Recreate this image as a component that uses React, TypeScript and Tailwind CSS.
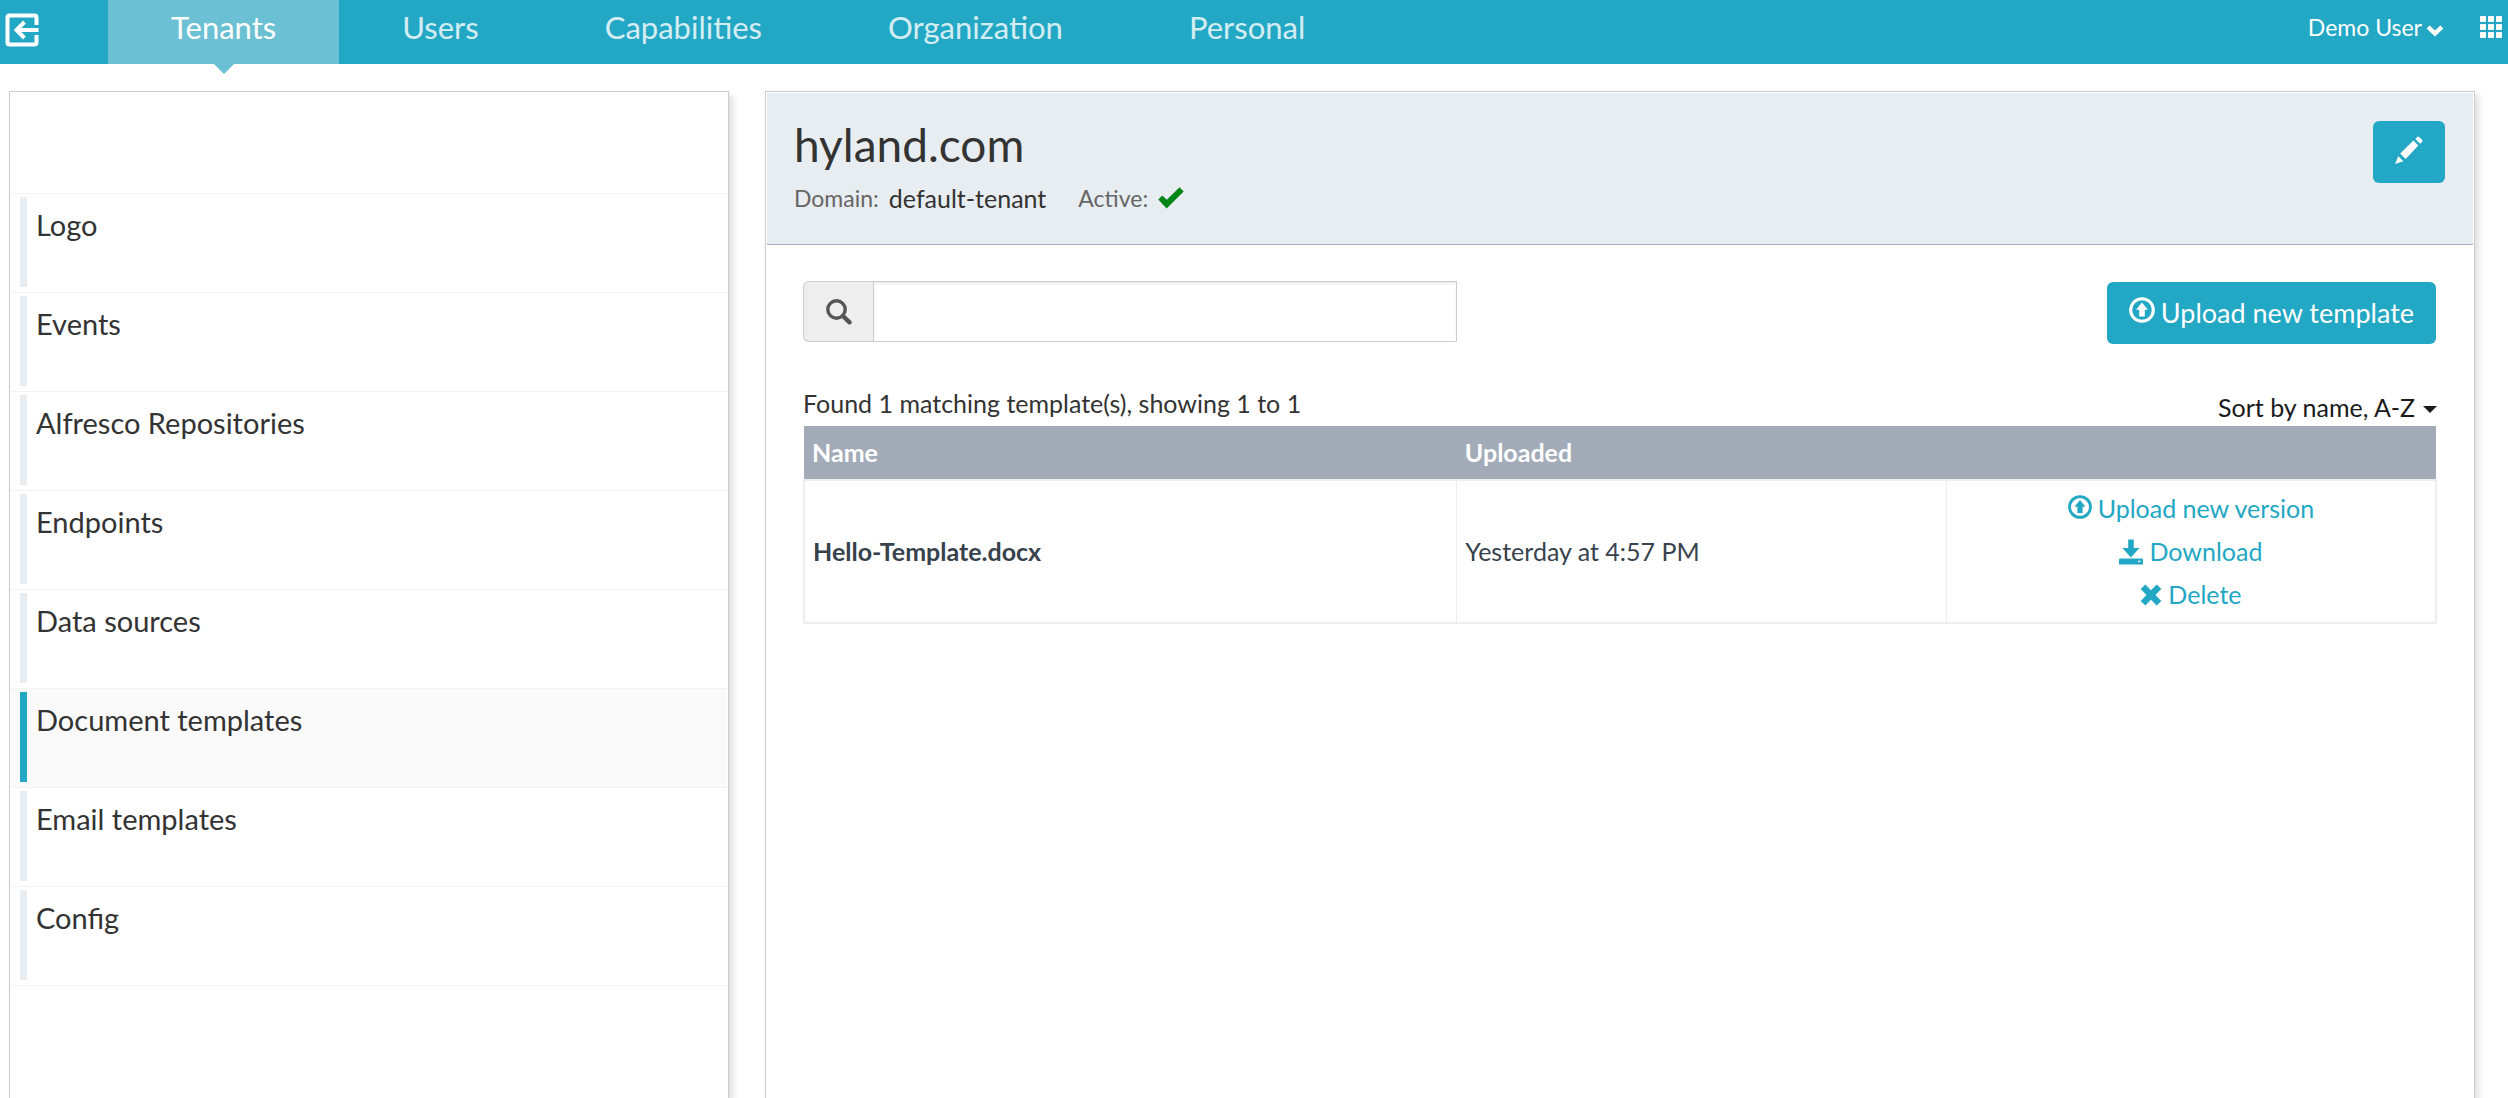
import { useState } from "react";
import type { ReactNode } from "react";

const tabs = ["Tenants", "Users", "Capabilities", "Organization", "Personal"];

const sections = [
  "Logo",
  "Events",
  "Alfresco Repositories",
  "Endpoints",
  "Data sources",
  "Document templates",
  "Email templates",
  "Config",
];

function ExitIcon() {
  return (
    <svg viewBox="0 0 34 34" className="size-[34px]" fill="none" stroke="currentColor" strokeWidth="4" aria-hidden="true">
      <path d="M31.500 12V4.500Q31.500 2.500 29.500 2.500H4.500Q2.500 2.500 2.500 4.500V29.500Q2.500 31.500 4.500 31.500H29.500Q31.500 31.500 31.500 29.500V22" />
      <path d="M12 17H33.500M19.500 9L11.500 17L19.500 25" />
    </svg>
  );
}

function ChevronDownIcon() {
  return (
    <svg viewBox="0 0 18 12" className="h-3 w-[18px]" fill="currentColor" aria-hidden="true">
      <path d="M3.600 0.600L9 5.400L14.400 0.600L17.400 3.600L9 11.600L0.600 3.600Z" />
    </svg>
  );
}

function AppsIcon() {
  return (
    <svg viewBox="0 0 22 22" className="size-[22px]" fill="currentColor" aria-hidden="true">
      {[0, 8, 16].map((y) =>
        [0, 8, 16].map((x) => <rect key={`${x}-${y}`} x={x} y={y} width="6" height="6" rx="0.800" />),
      )}
    </svg>
  );
}

function PencilIcon() {
  return (
    <svg viewBox="0 0 28 28" className="size-7" fill="currentColor" aria-hidden="true">
      <path d="M22.300 0.900Q23.200 0 24.100 0.900L27.200 4Q28 4.900 27.200 5.800L25.200 7.800L20.300 2.900Z" />
      <path d="M18.400 4.600L23.300 9.500L10.700 22.900L5.200 17.500Z" />
      <path d="M3.300 20.300L8.300 25.200L0 28Z" />
    </svg>
  );
}

function CheckIcon() {
  return (
    <svg viewBox="0 0 26 22" className="h-[22px] w-[26px]" fill="#008516" aria-hidden="true">
      <path d="M21.500 0.300L25.700 4.500L8.600 21.500L0.200 12.500L4.300 8.500L8.800 12.700Z" />
    </svg>
  );
}

function SearchIcon() {
  return (
    <svg viewBox="0 0 26 26" className="size-[26px]" fill="none" stroke="#555555" aria-hidden="true">
      <circle cx="10.500" cy="10.500" r="8.700" strokeWidth="3.400" />
      <path d="M17 17L23.500 23.300" strokeWidth="4.400" strokeLinecap="round" />
    </svg>
  );
}

function UploadIcon() {
  return (
    <svg viewBox="0 0 26 26" className="size-full" aria-hidden="true">
      <circle cx="13" cy="13" r="11.300" fill="none" stroke="currentColor" strokeWidth="3.100" />
      <path d="M13 5.500L19 12.800H15.800V19.500H10.200V12.800H7Z" fill="currentColor" />
    </svg>
  );
}

function DownloadIcon() {
  return (
    <svg viewBox="0 0 24 26" className="h-[26px] w-6" fill="currentColor" aria-hidden="true">
      <path d="M9.200 0.500H14.800V9H20.400L12 18.500L3.300 9H9.200Z" />
      <path fillRule="evenodd" d="M0.800 19.500H23.200L24 20.500V25.500H0V20.500ZM19 21.800V23H21.500V21.800Z" />
    </svg>
  );
}

function RemoveIcon() {
  return (
    <svg viewBox="0 0 22 22" className="size-[22px]" fill="currentColor" aria-hidden="true">
      <path d="M5.300 0.500L11 6.200L16.700 0.500L21.300 5.100L15.500 11L21.300 16.900L16.700 21.500L11 15.800L5.300 21.500L0.700 16.900L6.500 11L0.700 5.100Z" />
    </svg>
  );
}

function ActionLink({ icon, children }: { icon: ReactNode; children: ReactNode }) {
  return (
    <a href="#" className="flex items-center justify-center gap-1.5 leading-[43px] text-[#22a7c4]">
      {icon}
      <span>{children}</span>
    </a>
  );
}

function TopBar() {
  return (
    <header className="flex h-16 bg-[#22a7c4] text-white">
      <a href="#" aria-label="Exit" className="mr-[69px] ml-[5px] mt-[13px] size-[34px]">
        <ExitIcon />
      </a>
      <nav className="flex text-[31px] leading-[54px]">
        {tabs.map((tab, i) =>
          i === 0 ? (
            <a key={tab} href="#" aria-current="page" className="relative bg-[#6bc0d4] px-[63px]">
              {tab}
              <svg viewBox="0 0 20 10" className="absolute top-full left-1/2 h-2.5 w-5 -translate-x-1/2" fill="#6bc0d4" aria-hidden="true">
                <path d="M0 0H20L10 10Z" />
              </svg>
            </a>
          ) : (
            <a key={tab} href="#" className="px-[63px] text-white/80">
              {tab}
            </a>
          ),
        )}
      </nav>
      <div className="mr-1.5 ml-auto flex items-start">
        <button type="button" className="mr-9 flex items-center gap-1 text-[23px] leading-[54px]">
          Demo User
          <span className="pt-2">
            <ChevronDownIcon />
          </span>
        </button>
        <button type="button" aria-label="Applications" className="mt-4">
          <AppsIcon />
        </button>
      </div>
    </header>
  );
}

function Sidebar() {
  const [selected, setSelected] = useState("Document templates");
  return (
    <aside className="border border-b-0 border-[#cccccc] bg-white px-px pt-[101px] shadow-[4px_4px_6px_rgba(0,0,0,0.12)]">
      <ul className="border-b border-[#f2f2f2]">
        {sections.map((name) => (
          <li key={name} className="border-t border-[#f2f2f2]">
            <button
              type="button"
              onClick={() => setSelected(name)}
              className={
                name === selected
                  ? "block w-full bg-[#fafafa] pt-[3px] pb-[5px] pl-[9px] text-left"
                  : "block w-full pt-[3px] pb-[5px] pl-[9px] text-left"
              }
            >
              <span
                className={
                  name === selected
                    ? "block h-[90px] border-l-[7px] border-[#22a7c4] pt-2.5 pl-[9px] text-[29px] leading-9"
                    : "block h-[90px] border-l-[7px] border-[#e8edf1] pt-2.5 pl-[9px] text-[29px] leading-9"
                }
              >
                {name}
              </span>
            </button>
          </li>
        ))}
      </ul>
    </aside>
  );
}

function TenantHeader() {
  return (
    <div className="flex items-start justify-between border-b border-[#a3afbf] bg-[#e8edf1] pt-[26px] pr-7 pb-[29px] pl-[27px]">
      <div>
        <h1 className="text-[46px] leading-[52px]">hyland.com</h1>
        <dl className="mt-2.5 flex text-[23px] leading-[34px]">
          <dt className="mr-2.5 text-[#666666]">Domain:</dt>
          <dd className="mr-8 text-[25px]">default-tenant</dd>
          <dt className="mr-2.5 text-[#666666]">Active:</dt>
          <dd className="pt-1.5" aria-label="Yes">
            <CheckIcon />
          </dd>
        </dl>
      </div>
      <button type="button" aria-label="Edit" className="mt-0.5 flex h-[62px] w-[72px] items-center justify-center rounded-md bg-[#22a7c4] pb-1 text-white">
        <PencilIcon />
      </button>
    </div>
  );
}

function Templates() {
  return (
    <div className="px-9 pt-9">
      <div className="flex items-start justify-between">
        <div className="flex h-[61px] w-2/5">
          <label htmlFor="search" aria-label="Search" className="flex w-[70px] items-center justify-center rounded-l-md border border-r-0 border-[#cccccc] bg-[#eeeeee]">
            <SearchIcon />
          </label>
          <input
            id="search"
            type="text"
            className="min-w-0 flex-1 border border-[#cccccc] bg-white px-4 shadow-[inset_0_2px_2px_rgba(0,0,0,0.075)] outline-none"
          />
        </div>
        <button type="button" className="mt-px mr-px flex h-[62px] items-center gap-1.5 rounded-md bg-[#22a7c4] px-[22px] text-[27px] text-white">
          <span className="mb-1.5 size-[26px]">
            <UploadIcon />
          </span>
          Upload new template
        </button>
      </div>

      <div className="mt-[42px] flex h-10 items-start justify-between text-[25px] leading-[34px]">
        <p>Found 1 matching template(s), showing 1 to 1</p>
        <label className="flex items-center gap-2 pt-1 text-[#1a1a1a]">
          <select aria-label="Sort order" className="field-sizing-content appearance-none bg-transparent leading-[34px] outline-none">
            <option>Sort by name, A-Z</option>
            <option>Sort by name, Z-A</option>
          </select>
          <svg viewBox="0 0 14 7" className="mt-1 h-[7px] w-3.5" fill="currentColor" aria-hidden="true">
            <path d="M0 0H14L7 7Z" />
          </svg>
        </label>
      </div>

      <table className="w-full table-fixed border-collapse text-[25px] text-[#37424d]">
        <colgroup>
          <col className="w-2/5" />
          <col className="w-[30%]" />
          <col className="w-[30%]" />
        </colgroup>
        <thead>
          <tr className="h-[54px] bg-[#a3abb9] text-left text-white">
            <th className="px-2 font-bold">Name</th>
            <th className="px-2 font-bold">Uploaded</th>
            <th aria-label="Actions" />
          </tr>
        </thead>
        <tbody>
          <tr className="border-2 border-[#eeeeee]">
            <td className="border-r border-[#eeeeee] px-2 font-bold">Hello-Template.docx</td>
            <td className="border-r border-[#eeeeee] px-2">Yesterday at 4:57 PM</td>
            <td className="pt-1.5 pb-1.5">
              <ActionLink icon={<span className="mb-1 size-6"><UploadIcon /></span>}>Upload new version</ActionLink>
              <ActionLink icon={<DownloadIcon />}>Download</ActionLink>
              <ActionLink icon={<RemoveIcon />}>Delete</ActionLink>
            </td>
          </tr>
        </tbody>
      </table>
    </div>
  );
}

export default function App() {
  return (
    <div className="flex min-h-screen flex-col bg-white font-['Lato',sans-serif] text-[#333333]">
      <TopBar />
      <div className="grid flex-1 grid-cols-[72fr_171fr] gap-9 overflow-hidden pt-[27px] pr-[33px] pl-[9px]">
        <Sidebar />
        <main className="border border-b-0 border-[#cccccc] bg-white p-px shadow-[4px_4px_6px_rgba(0,0,0,0.12)]">
          <TenantHeader />
          <Templates />
        </main>
      </div>
    </div>
  );
}
